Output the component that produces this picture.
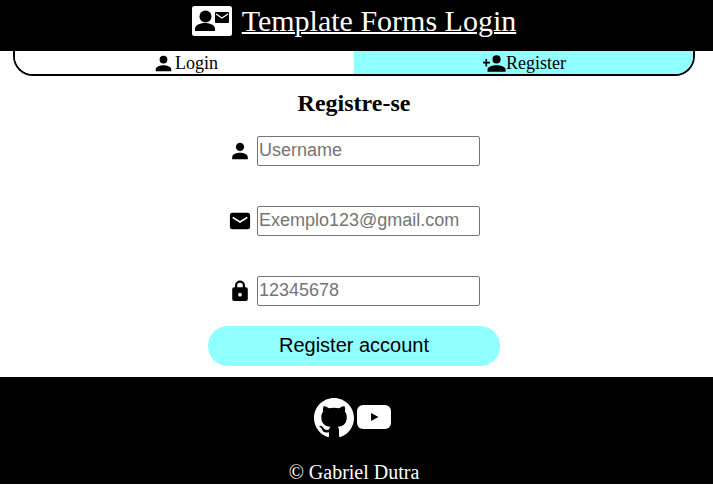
<script>
  let tab = 'register';
</script>

<header class="top">
  <svg class="brand-icon" viewBox="0 0 40 30" aria-hidden="true">
    <path fill="#fff" d="M2.500 0h35A2.500 2.500 0 0 1 40 2.500v25a2.500 2.500 0 0 1-2.500 2.500h-35A2.500 2.500 0 0 1 0 27.500v-25A2.500 2.500 0 0 1 2.500 0Z" />
    <circle cx="13.500" cy="10.500" r="6" fill="#000" />
    <path fill="#000" d="M3 25v-2.500c0-3.800 6.500-5.500 10-5.500s10 1.700 10 5.500V25Z" />
    <rect x="23" y="6" width="14" height="11" rx="1" fill="#000" />
    <path fill="none" stroke="#fff" stroke-width="1.300" d="M24 8l6 4 6-4" />
  </svg>
  <h1><a href="#top">Template Forms Login</a></h1>
</header>

<nav class="tabs">
  <button class="tab login" class:active={tab === 'login'} onclick={() => (tab = 'login')}>
    <svg class="tab-icon" viewBox="0 0 24 24"><path d="M12 12a5.500 5.500 0 1 0 0-11 5.500 5.500 0 0 0 0 11Zm0 2.500c-4 0-11 2-11 5.500v3h22v-3c0-3.500-7-5.500-11-5.500Z" /></svg>
    Login
  </button>
  <button class="tab" class:active={tab === 'register'} onclick={() => (tab = 'register')}>
    <svg class="tab-icon wide" viewBox="0 0 28 20"><path d="M16.500 10a5 5 0 1 0 0-10 5 5 0 0 0 0 10Zm0 2c-4.500 0-11 1.800-11 5v3h22v-3c0-3.200-6.500-5-11-5ZM5 8V4.500H3V8H0v2h3v3.500h2V10h3.500V8Z" /></svg>
    Register
  </button>
</nav>

<main class="panel">
  <h2>Registre-se</h2>
  <form class="fields" onsubmit={(e) => e.preventDefault()}>
    <label class="field">
      <svg class="field-icon" viewBox="0 0 24 24"><path d="M12 12a4.500 4.500 0 1 0 0-9 4.500 4.500 0 0 0 0 9Zm0 2c-3 0-8.500 1.500-8.500 4.500V21h17v-2.500C20.500 15.500 15 14 12 14Z" /></svg>
      <input type="text" placeholder="Username" />
    </label>
    <label class="field">
      <svg class="field-icon" viewBox="0 0 24 24">
        <rect x="1" y="3" width="22" height="18" rx="2.500" />
        <path fill="none" stroke="#fff" stroke-width="1.800" d="M4 8l8 5 8-5" />
      </svg>
      <input type="text" placeholder="Exemplo123@gmail.com" />
    </label>
    <label class="field">
      <svg class="field-icon" viewBox="0 0 24 24"><path fill-rule="evenodd" d="M17.500 8V6a5.500 5.500 0 0 0-11 0v2H5.500a2 2 0 0 0-2 2v11a2 2 0 0 0 2 2h13a2 2 0 0 0 2-2V10a2 2 0 0 0-2-2ZM9 6a3 3 0 0 1 6 0v2H9Zm3 12a2 2 0 1 1 0-4 2 2 0 0 1 0 4Z" /></svg>
      <input type="text" placeholder="12345678" />
    </label>
    <button class="submit" type="submit">Register account</button>
  </form>
</main>

<footer class="bottom">
  <div class="social">
    <svg class="github" viewBox="0 0 16 16"><path fill="#fff" d="M8 0C3.580 0 0 3.580 0 8c0 3.540 2.290 6.530 5.470 7.590.4.070.55-.17.55-.38 0-.19-.01-.82-.01-1.490-2.010.37-2.530-.49-2.690-.94-.09-.23-.48-.94-.82-1.130-.28-.15-.68-.52-.01-.53.630-.01 1.080.58 1.230.82.720 1.210 1.870.870 2.330.66.070-.52.280-.87.510-1.070-1.780-.2-3.640-.89-3.640-3.950 0-.87.310-1.590.82-2.150-.08-.2-.36-1.020.08-2.120 0 0 .67-.21 2.200.82.640-.18 1.320-.27 2-.27s1.360.09 2 .27c1.530-1.040 2.200-.82 2.200-.82.44 1.100.16 1.920.08 2.120.51.560.82 1.270.82 2.150 0 3.070-1.870 3.750-3.650 3.950.29.250.54.730.54 1.480 0 1.070-.01 1.930-.01 2.200 0 .21.150.46.550.38A8.010 8.010 0 0 0 16 8c0-4.420-3.580-8-8-8Z" /></svg>
    <svg class="youtube" viewBox="0 0 34 24"><path fill="#fff" d="M6 0h22a6 6 0 0 1 6 6v12a6 6 0 0 1-6 6H6a6 6 0 0 1-6-6V6a6 6 0 0 1 6-6Z" /><path fill="#000" d="M14 8v8l7.500-4Z" /></svg>
  </div>
  <p>© Gabriel Dutra</p>
</footer>

<style>
  :global(body) {
    font-family: "Liberation Serif", "Times New Roman", serif;
    background: #fff;
    color: #000;
  }

  .top {
    background: #000;
    height: 51px;
    padding-right: 5px;
    box-sizing: border-box;
    display: flex;
    align-items: center;
    justify-content: center;
    gap: 10px;
  }

  .brand-icon {
    width: 40px;
    height: 30px;
    margin-bottom: 9px;
  }

  h1 {
    margin: 0 0 9px;
    font-size: 30px;
    font-weight: 400;
    line-height: 34px;
  }

  h1 a {
    color: #fff;
    text-decoration-thickness: 2px;
  }

  .tabs {
    margin: 0 18px 0 13px;
    height: 25px;
    box-sizing: border-box;
    display: flex;
    border: 2px solid #000;
    border-top: 0;
    border-radius: 0 0 20px 20px;
    overflow: hidden;
  }

  .tab {
    flex: 1;
    display: flex;
    align-items: center;
    justify-content: center;
    padding: 1px 0 0;
    border: 0;
    background: #fff;
    color: #000;
    font-family: inherit;
    font-size: 18px;
  }

  .tab.login {
    gap: 3px;
  }

  .tab.active {
    background: #90ffff;
  }

  .tab-icon {
    width: 17px;
    height: 17px;
  }

  .login .tab-icon {
    margin-left: 4px;
  }

  .tab-icon.wide {
    width: 23px;
    height: 17px;
    margin-left: 2px;
  }

  .panel {
    display: flex;
    flex-direction: column;
    align-items: center;
    height: 301px;
    padding-right: 5px;
  }

  h2 {
    margin: 14px 0 0;
    font-size: 24px;
    line-height: 27px;
  }

  .fields {
    margin-top: 19px;
    display: flex;
    flex-direction: column;
    align-items: center;
  }

  .field {
    display: flex;
    align-items: center;
    gap: 6px;
    margin-bottom: 40px;
    margin-left: 1px;
    height: 30px;
  }

  .field:nth-child(3) {
    margin-bottom: 20px;
  }

  .field-icon {
    width: 22px;
    height: 22px;
  }

  input {
    width: 223px;
    height: 30px;
    box-sizing: border-box;
    padding: 0 1px 2px;
    border: 1px solid #767676;
    border-radius: 2px;
    font-family: "Liberation Sans", Arial, sans-serif;
    font-size: 18px;
  }

  .submit {
    width: 292px;
    height: 40px;
    padding: 0 0 2px;
    border: 0;
    border-radius: 20px;
    background: #90ffff;
    color: #000;
    font-family: "Liberation Sans", Arial, sans-serif;
    font-size: 20px;
  }

  .bottom {
    background: #000;
    color: #fff;
    height: 107px;
    padding-right: 5px;
    text-align: center;
  }

  .social {
    display: flex;
    align-items: center;
    justify-content: center;
    gap: 3px;
    padding-top: 21px;
    margin-right: 3px;
  }

  .github {
    width: 40px;
    height: 40px;
  }

  .youtube {
    width: 34px;
    height: 24px;
    margin-bottom: 2px;
  }

  p {
    margin: 23px 0 0;
    font-size: 20px;
    line-height: 23px;
  }
</style>
